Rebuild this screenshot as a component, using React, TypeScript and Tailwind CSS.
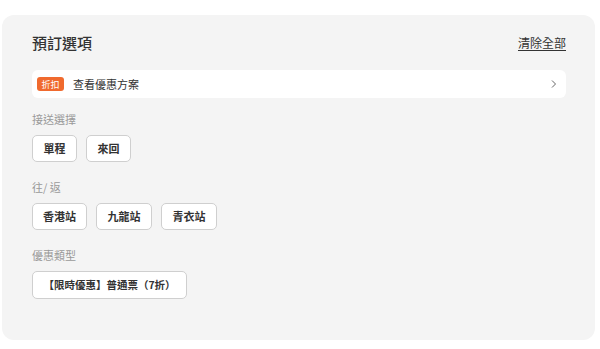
import * as React from "react";

const font = { fontFamily: '"Noto Sans CJK TC", "Noto Sans", sans-serif' };

function Chip({ label, className }: { label: string; className: string }) {
  return (
    <button
      className={`h-[27px] rounded-[5px] border border-[#cfcfcf] bg-white font-semibold text-[#333] leading-none flex items-center justify-center ${className}`}
    >
      {label}
    </button>
  );
}

export default function App() {
  return (
    <div className="w-[600px] h-[349px] bg-white pt-[15px] pl-[2px]" style={font}>
      {/* 預訂選項卡片 */}
      <div className="w-[593px] h-[325px] rounded-[12px] bg-[#f4f4f4] pl-[30px] pr-[29px] pt-[16px]">
        <div className="flex items-center justify-between h-[24px]">
          <div className="text-[15px] font-medium text-[#333]">預訂選項</div>
          <button className="text-[12px] text-[#333] underline underline-offset-2">
            清除全部
          </button>
        </div>

        {/* 優惠 */}
        <div className="mt-[15px] h-[28px] rounded-[6px] bg-white flex items-center pl-[5px] pr-[8px]">
          <span className="h-[14px] w-[27px] rounded-[3px] bg-[#f06a2e] text-white text-[9px] leading-none flex items-center justify-center">
            折扣
          </span>
          <span className="ml-[9px] text-[11px] text-[#333]">查看優惠方案</span>
          <svg className="ml-auto" width="8" height="10" viewBox="0 0 8 10" fill="none">
            <path d="M2 1.5 L5.5 5 L2 8.5" stroke="#666" strokeWidth="1" />
          </svg>
        </div>

        <div className="mt-[13px] text-[11px] leading-[16px] text-[#999]">接送選擇</div>
        <div className="mt-[8px] flex gap-[9px]">
          <Chip label="單程" className="w-[45px] text-[11px]" />
          <Chip label="來回" className="w-[45px] text-[11px]" />
        </div>

        <div className="mt-[17px] text-[11px] leading-[16px] text-[#999]">往/ 返</div>
        <div className="mt-[8px] flex gap-[9px]">
          <Chip label="香港站" className="w-[55px] text-[11px]" />
          <Chip label="九龍站" className="w-[56px] text-[11px]" />
          <Chip label="青衣站" className="w-[56px] text-[11px]" />
        </div>

        <div className="mt-[17px] text-[11px] leading-[16px] text-[#999]">優惠類型</div>
        <div className="mt-[8px] flex">
          <Chip label="【限時優惠】普通票（7折）" className="w-[155px] h-[28px] text-[10.5px]" />
        </div>
      </div>
    </div>
  );
}
